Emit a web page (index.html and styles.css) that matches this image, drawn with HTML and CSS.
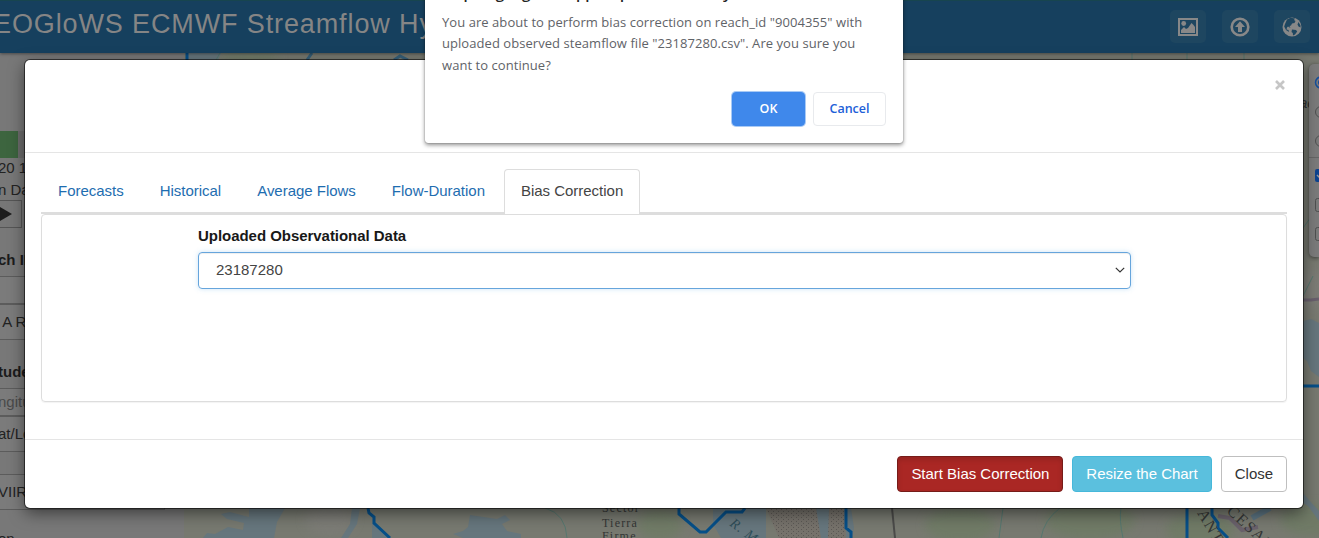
FILE: index.html
```html
<!DOCTYPE html>
<html lang="en">
<head>
<meta charset="utf-8">
<title>GEOGloWS ECMWF Streamflow Hydroviewer</title>
<link rel="stylesheet" href="styles.css">
</head>
<body>
<div class="app">
  <header class="topbar">
    <div class="brand">EOGloWS ECMWF Streamflow Hy</div>
    <div class="tools">
      <span class="tool"><svg width="22" height="20" viewBox="0 0 22 20"><path fill-rule="evenodd" d="M1 1h20v18H1zM3 3v14h16V3z"/><circle cx="6.700" cy="6.500" r="2.400"/><path d="M4 13l3-3 2 2 2-1 3.500-5 2 2 1.500 2v6H4z"/></svg></span>
      <span class="tool"><svg width="22" height="20" viewBox="0 0 22 20"><circle cx="11" cy="10" r="8.300" fill="none" stroke="#888" stroke-width="2.600"/><path d="M11 4.300l5 5.700h-3v5H9v-5H6z"/></svg></span>
      <span class="tool"><svg width="22" height="20" viewBox="0 0 22 20"><circle cx="11" cy="10" r="9.500"/><path fill="#1e4660" d="M6 2.500l3.500-1.700 4.500.7-1 1.500 1.500 1-1 2-2.500.5-1 2-1.500.5 1 2-2.500-1.500-1 1-.5 2 2 .5.500 2-3-2-1.800-3.500L4 7zM11 12.500l4 .5 1.200 1.500-2.200 3-2 1-.2-2.500-1.300-1zM17.500 5l2 3.500v2l-2-1-1-2z"/></svg></span>
    </div>
  </header>

  <div class="workspace">
    <aside class="sidebar">
      <div class="progress"></div>
      <p class="line first">20 1:00</p>
      <p class="line">n Date</p>
      <button class="play"><svg width="12" height="14" viewBox="0 0 12 14"><path d="M0 0l12 7-12 7z"/></svg></button>
      <p class="label reach">ch ID</p>
      <div class="field blank"></div>
      <div class="field act">&nbsp;A Reach</div>
      <p class="label lat">tude</p>
      <div class="field hint">ngitude</div>
      <div class="field go">at/Lon</div>
      <div class="field viirs">VIIRS</div>
      <p class="line last">on</p>
    </aside>
    <div class="map">
      <svg width="1135" height="485" viewBox="184 53 1135 485">
        <defs>
          <pattern id="dots" width="5" height="4" patternUnits="userSpaceOnUse"><rect width="5" height="4" fill="#76726b"/><path d="M1 1.500h1M3 3.500h1" stroke="#5c5955"/></pattern>
          <filter id="soft"><feGaussianBlur stdDeviation="5"/></filter>
        </defs>
        <rect x="184" y="53" width="1135" height="485" fill="#777970"/>
        <g filter="url(#soft)" fill="#707a66">
          <ellipse cx="250" cy="57" rx="30" ry="6"/><ellipse cx="660" cy="525" rx="22" ry="16"/><ellipse cx="960" cy="525" rx="35" ry="18"/><ellipse cx="1090" cy="520" rx="45" ry="20"/><ellipse cx="1200" cy="530" rx="34" ry="18"/><ellipse cx="1310" cy="520" rx="30" ry="16"/>
          <ellipse cx="1313" cy="290" rx="14" ry="20" fill="#7b7c76"/><ellipse cx="330" cy="520" rx="25" ry="15" fill="#7b7c76"/>
        </g>
        <g fill="#66767d">
          <path d="M187 53h34l-3 8h-31z"/>
          <path d="M249 508h36l-8 14-3 16h-71l4-5 8 1 13-7 15 3 1-7-17-4-6-5 9-2 19 5z"/>
          <path d="M352 508h8l-3 16-9 14h-7l9-14zM372 523l10 6 8 9h-18z"/>
          <path d="M470 515l27 4 8-4 5 5-8 4 5 7 14 3v4h-58l-10-4 10-3 5-4z"/>
          <path d="M713 508h53v30h-45l-8-14zM816 508h14v30h-13zM844 508h7l3 20-2 10h-6z"/>
          <path d="M1303 321l8-2 8 4v54l-8-6-4-10-4-3zM1303 493l6 7 10 11v10l-11-15-5-3z"/>
        </g>
        <path fill="url(#dots)" d="M766 508h50l5 30h-42zM829 508h15l2 30h-18z"/>
        <g fill="none" stroke="#56776f"><path d="M545 508q21 6 22 30M1003 508l-4 30M1060 508q-16 12-19 30M1121 508q-2 12 2 30M216 60l4-7M546 60v-7M1132 60v-7M1187 60v-7M1244 60v-7M1303 296l10-20M1303 228l16-22"/></g>
        <path d="M892 508l3 30" stroke="#4b4b49" stroke-width="2"/>
        <path d="M1303 300h8l8-1" stroke="#69606d" stroke-width="3" fill="none"/>
        <path d="M1218 516l12 2 12 12 16-3" stroke="#69616b" stroke-width="4" fill="none"/>
        <path d="M1252 518l18-10" stroke="#5b7380" stroke-width="6"/>
        <g fill="none" stroke="#064f88" stroke-width="3">
          <path d="M187 53v8M368 508l1 5 5 4v6l16 15M679 508v6l21 18h6l20-20h16l3-4M846 508v20l5 4v6M1303 386h16"/>
          <path d="M1187 508v30M1212 508v7l6 8v5l10 10"/>
          <path d="M307 60l5-7M394 60l6-4 8 4" stroke="#365f78"/>
        </g>
        <g class="maptext">
          <text x="602" y="512" class="place">Sector</text><text x="602" y="527" class="place">Tierra</text><text x="602" y="540" class="place">Firme</text>
          <text transform="translate(729 525) rotate(37)" class="river">R. MAGD</text>
          <text transform="translate(1197 513) rotate(60)" class="range">ANT</text>
          <text transform="translate(1226 512) rotate(43)" class="range">CESAR</text>
          <text x="1299" y="108" class="town">ac</text>
        </g>
      </svg>
    </div>
  </div>

  <div class="layers">
    <svg width="17" height="190" viewBox="0 0 17 190" fill="none" stroke="#505050">
      <circle cx="12" cy="18.500" r="5.500" stroke="#164e9c" stroke-width="1.500"/><circle cx="12" cy="18.500" r="3" fill="#164e9c" stroke="none"/>
      <circle cx="12" cy="48" r="5.500"/><circle cx="12" cy="77" r="5.500"/>
      <path d="M0 93.500h17" stroke="#666"/>
      <rect x="6" y="105" width="13" height="13" rx="2" fill="#0d438f" stroke="none"/><path d="M8 111l3 3 5-5" stroke="#999" stroke-width="1.500"/>
      <rect x="6.500" y="134.500" width="13" height="13" rx="2"/><rect x="6.500" y="163.500" width="13" height="13" rx="2"/>
    </svg>
  </div>
</div>

<section class="modal">
  <div class="modal-head"><svg class="close" width="10" height="10" viewBox="0 0 10 10"><path d="M1 1l8 8M9 1L1 9"/></svg></div>
  <div class="modal-body">
    <nav class="tabs"><a>Forecasts</a><a>Historical</a><a>Average Flows</a><a>Flow-Duration</a><a class="active">Bias Correction</a></nav>
    <div class="panel">
      <div class="control">
        <label>Uploaded Observational Data</label>
        <div class="select"><span>23187280</span><svg width="10" height="6" viewBox="0 0 10 6"><path d="M.8.8L5 5 9.200.8"/></svg></div>
      </div>
    </div>
  </div>
  <footer class="modal-foot"><button class="btn danger">Start Bias Correction</button><button class="btn info">Resize the Chart</button><button class="btn">Close</button></footer>
</section>

<div class="dialog">
  <h2>https://geoglows.apps.aquaveo.com says</h2>
  <p>You are about to perform bias correction on reach_id "9004355" with<br>uploaded observed steamflow file "23187280.csv". Are you sure you<br>want to continue?</p>
  <div class="dialog-actions"><button class="ok">OK</button><button class="cancel">Cancel</button></div>
</div>
</body>
</html>
```
FILE: styles.css
```css
* { box-sizing: border-box; }
html, body { margin: 0; width: 1319px; height: 538px; overflow: hidden; }
body { position: relative; font: 15px/22px "Liberation Sans", Arial, sans-serif; color: #333; }
p, h2 { margin: 0; }
button { font: inherit; padding: 0; }

.app { display: flex; flex-direction: column; height: 538px; overflow: hidden; background: #777; }
.topbar { position: relative; flex: none; display: flex; justify-content: space-between; height: 53px; padding-right: 9px; background: #16405e; border-top: 1px solid #17454f; box-shadow: 0 1px 3px rgba(0,0,0,.4); z-index: 1; }
.brand { margin-left: -7px; padding-top: 7px; font-size: 27px; line-height: 32px; letter-spacing: .88px; color: #858585; white-space: nowrap; }
.tools { display: flex; gap: 16px; padding-top: 9px; }
.tool { display: flex; align-items: center; justify-content: center; width: 36px; height: 33px; border-radius: 5px; background: #1e4660; }
.tool svg { fill: #888; }
.workspace { display: flex; flex: 1; min-height: 0; }
.sidebar { flex: none; width: 184px; padding-top: 78px; background: #787878; color: #222; white-space: nowrap; overflow: hidden; }
.progress { width: 165px; height: 27px; background: linear-gradient(90deg, #3d653f 18px, #6d6d6d 18px); }
.line, .label { margin-left: -2px; line-height: 22px; }
.line.first { margin-top: -1px; }
.play { display: flex; align-items: center; width: 22px; height: 28px; margin-top: -1px; background: #777; border: 1px solid #555; border-left: 0; }
.play svg { fill: #1c1c1c; }
.label { font-weight: bold; color: #1b1b1b; }
.label.reach { margin-top: 21px; }
.label.lat { margin-top: 21px; }
.field { width: 165px; height: 36px; line-height: 34px; text-indent: -2px; background: #7b7b7b; border: 1px solid #5c5c5c; border-left: 0; }
.blank { height: 28px; margin-top: 5px; }
.hint { height: 28px; margin-top: 5px; line-height: 26px; color: #4a4a4a; }
.go { margin-top: 0; }
.viirs { margin-top: 22px; }
.last { margin-top: 18px; }
.map { flex: 1; overflow: hidden; }
.map svg { display: block; }
.maptext { fill: #343635; font-family: "Liberation Serif", serif; }
.place { font-size: 12px; letter-spacing: 1.2px; }
.river { font-size: 14px; font-style: italic; letter-spacing: 1px; fill: #2e4d58; }
.range { font-size: 16px; letter-spacing: 1.500px; }
.town { font: italic 15px "Liberation Sans", sans-serif; }
.layers { position: absolute; top: 64px; left: 1309px; width: 10px; height: 193px; overflow: hidden; background: #7b7b7b; border-radius: 5px 0 0 5px; box-shadow: 0 1px 4px rgba(0,0,0,.5); }
.layers svg { display: block; }

.modal { position: absolute; top: 60px; left: 25px; z-index: 2; display: flex; flex-direction: column; width: 1278px; height: 448px; background: #fff; border-radius: 5px; box-shadow: 0 0 0 1px rgba(0,0,0,.55), 0 5px 16px rgba(0,0,0,.5); }
.modal-head { height: 93px; padding: 20px 18px; display: flex; justify-content: flex-end; border-bottom: 1px solid #e5e5e5; }
.close { fill: none; stroke: #c6c6c6; stroke-width: 2.600; }
.modal-body { flex: 1; padding: 16px; }
.tabs { display: flex; gap: 2px; height: 45px; border-bottom: 2px solid #ddd; }
.tabs a { height: 45px; padding: 10px 16px; border: 1px solid transparent; color: #1e6db0; letter-spacing: -.02px; white-space: nowrap; }
.tabs .active { color: #444; background: #fff; border-color: #ddd; border-bottom: 0; border-radius: 4px 4px 0 0; }
.panel { height: 188px; padding: 10px 156px; border: 1px solid #ddd; border-radius: 4px; box-shadow: 0 1px 1px rgba(0,0,0,.05); }
.control label { display: block; height: 27px; font-weight: bold; line-height: 21px; letter-spacing: -.04px; color: #181818; }
.select { display: flex; align-items: center; justify-content: space-between; width: 933px; height: 37px; padding: 0 5px 2px 17px; border: 1px solid #66a5dc; border-radius: 4px; color: #444; box-shadow: inset 0 1px 1px rgba(0,0,0,.07), 0 0 5px rgba(102,175,233,.35); }
.select svg { fill: none; stroke: #333; stroke-width: 1.200; }
.modal-foot { display: flex; justify-content: flex-end; gap: 9px; height: 69px; padding: 16px; border-top: 1px solid #e5e5e5; }
.btn { height: 36px; padding: 0 13px 1px; letter-spacing: -.02px; border: 1px solid #bfbfbf; border-radius: 4px; background: #fff; color: #333; white-space: nowrap; }
.danger { color: #fff; background: #aa2724; border-color: #761c19; box-shadow: inset 0 3px 5px rgba(0,0,0,.12); }
.info { color: #fff; background: #5bc0de; border-color: #46b8da; }

.dialog { position: absolute; top: -34px; left: 425px; z-index: 3; width: 478px; height: 177px; padding: 16px 17px; background: #fff; border-radius: 3px; box-shadow: 0 0 1px rgba(0,0,0,.6), 0 2px 4px rgba(0,0,0,.45); font-family: "Open Sans", "Noto Sans", sans-serif; }
.dialog h2 { height: 30px; font-size: 15px; font-weight: 600; line-height: 22px; color: #222; }
.dialog p { font-size: 13px; line-height: 21.300px; letter-spacing: .055px; color: #5f6368; white-space: nowrap; }
.dialog-actions { display: flex; justify-content: flex-end; gap: 8px; margin-top: 16px; }
.dialog button { width: 73px; height: 34px; border-radius: 4px; font-size: 12.500px; font-weight: 600; }
.ok { color: #fff; background: #3f88eb; border: 1px solid #3f88eb; box-shadow: 0 0 0 1px #a9caf5; }
.cancel { color: #2160d8; background: #fff; border: 1px solid #e8eaed; }
```
